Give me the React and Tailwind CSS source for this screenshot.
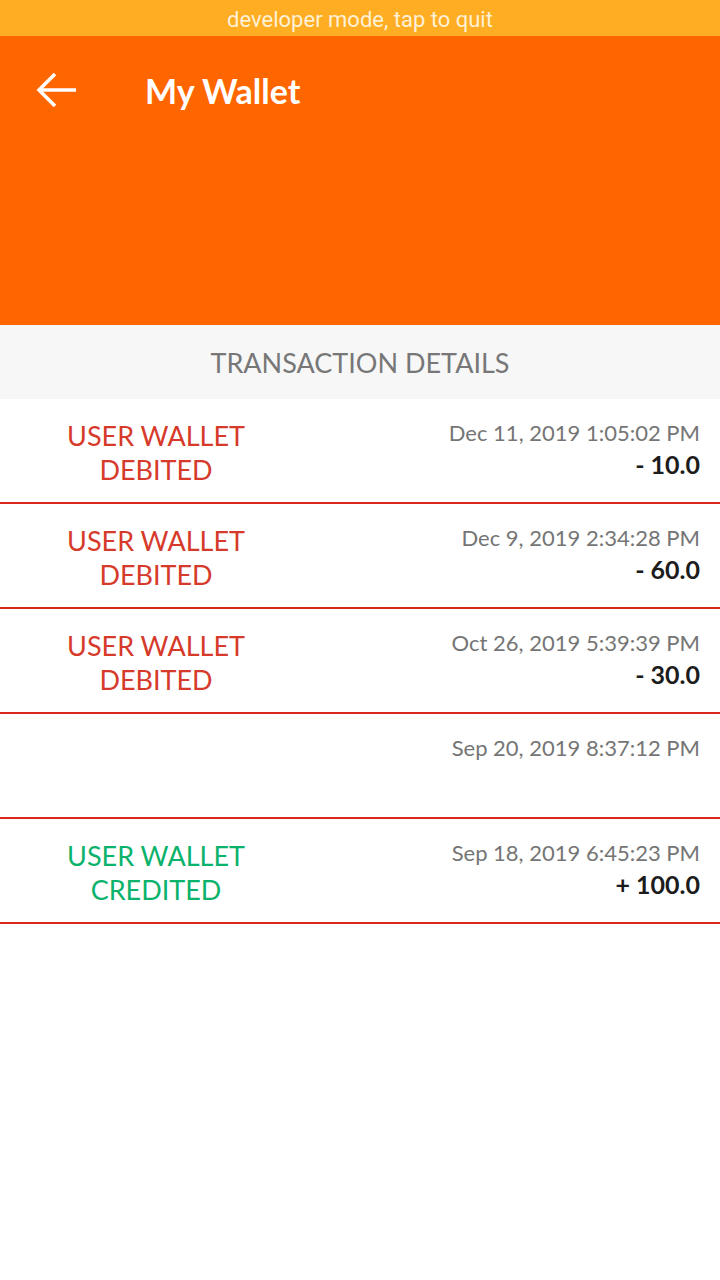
import React from "react";

const rows = [
  { label: ["USER WALLET", "DEBITED"], color: "text-[#d63a2a]", date: "Dec 11, 2019 1:05:02 PM", amount: "- 10.0" },
  { label: ["USER WALLET", "DEBITED"], color: "text-[#d63a2a]", date: "Dec 9, 2019 2:34:28 PM", amount: "- 60.0" },
  { label: ["USER WALLET", "DEBITED"], color: "text-[#d63a2a]", date: "Oct 26, 2019 5:39:39 PM", amount: "- 30.0" },
  { label: null, color: "", date: "Sep 20, 2019 8:37:12 PM", amount: "" },
  { label: ["USER WALLET", "CREDITED"], color: "text-[#0bb26b]", date: "Sep 18, 2019 6:45:23 PM", amount: "+ 100.0" },
];

export default function App() {
  return (
    <div className="w-[720px] h-[1280px] bg-white font-['Lato','Liberation_Sans',sans-serif]">
      <div className="h-[36px] bg-[#ffad22] flex items-center justify-center pt-[3px]">
        <span className="font-['Roboto',sans-serif] text-[22px] text-[#fff1d6] leading-none">developer mode, tap to quit</span>
      </div>
      <div className="h-[289px] bg-[#ff6600]">
        <div className="flex items-center h-[112px] pb-[2px]">
          <div className="w-[145px] pl-[36px] flex items-center">
            <svg width="42" height="40" viewBox="0 0 42 40" fill="none" stroke="white" strokeWidth="3.5">
              <path d="M3 19 H40" />
              <path d="M19 3 L3 19 L19 35" />
            </svg>
          </div>
          <span className="text-white text-[34px] font-bold leading-none">My Wallet</span>
        </div>
      </div>
      <div className="h-[74px] bg-[#f7f7f7] flex items-center justify-center">
        <span className="text-[27px] text-[#777777] leading-none">TRANSACTION DETAILS</span>
      </div>
      {rows.map((r, i) => (
        <div key={i} className="h-[105px] border-b-2 border-[#d9271c] flex">
          <div className={`w-[312px] pt-[20px] flex flex-col items-center text-[27px] leading-[34px] ${r.color}`}>
            {r.label && r.label.map((t) => <span key={t}>{t}</span>)}
          </div>
          <div className="flex-1 pr-[20px] pt-[20px] flex flex-col items-end">
            <span className="text-[22px] leading-[28px] text-[#757575]">{r.date}</span>
            <span className="text-[25px] leading-[34px] font-bold text-[#1c1c1c]">{r.amount}</span>
          </div>
        </div>
      ))}
    </div>
  );
}
